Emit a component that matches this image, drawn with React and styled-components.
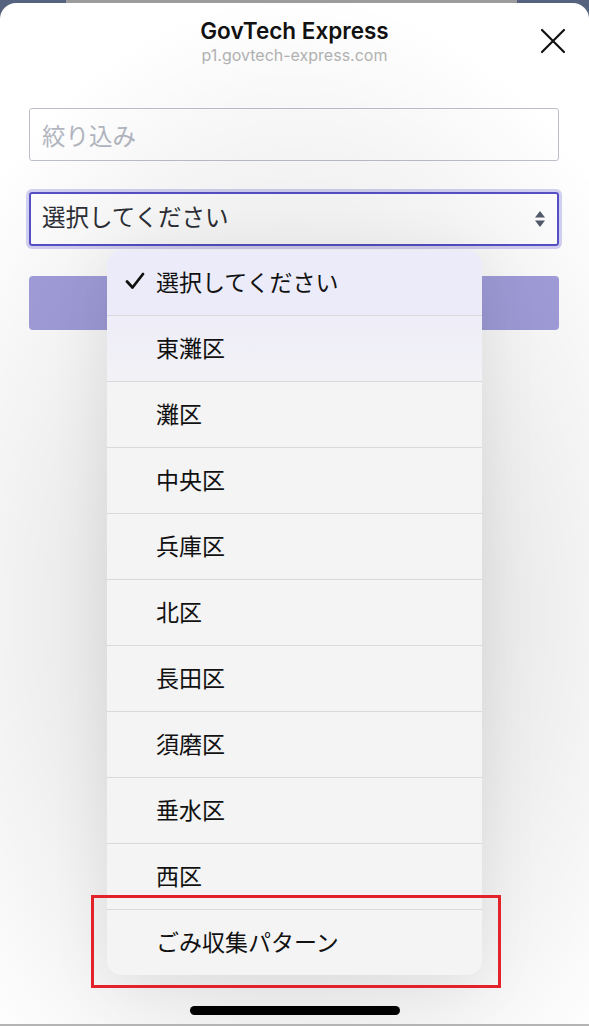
import React from "react";
import styled, { createGlobalStyle } from "styled-components";

const Global = createGlobalStyle`
  html, body { margin: 0; padding: 0; }
  body {
    width: 589px;
    height: 1026px;
    overflow: hidden;
    background: #56637e;
    font-family: "Inter", "Roboto", "Noto Sans CJK JP", sans-serif;
  }
`;

const Screen = styled.div`
  position: relative;
  width: 589px;
  height: 1026px;
  display: flex;
  flex-direction: column;
  background: linear-gradient(to right, #56637e 0 66px, #9c9c9c 66px 517px, #56637e 517px);
  overflow: hidden;
`;

const Sheet = styled.div`
  position: relative;
  margin-top: 3px;
  flex: 1;
  background: #ffffff;
  border-radius: 16px 16px 0 0;
  border-bottom: 2px solid #b4b4b4;
  display: flex;
  flex-direction: column;
  overflow: hidden;
`;

const Header = styled.header`
  position: relative;
  display: flex;
  flex-direction: column;
  align-items: center;
  padding-top: 14px;
  height: 90px;
  box-sizing: border-box;
`;

const Title = styled.div`
  font-family: "Inter", "Roboto", sans-serif;
  font-size: 22.5px;
  font-weight: 600;
  color: #111;
  line-height: 27px;
`;

const Subtitle = styled.div`
  font-family: "Inter", "Roboto", sans-serif;
  font-size: 16px;
  color: #b3b3b3;
  line-height: 23px;
`;

const Close = styled.button`
  position: absolute;
  top: 24px;
  right: 22px;
  width: 28px;
  height: 28px;
  padding: 0;
  border: none;
  background: transparent;
  display: flex;
  align-items: center;
  justify-content: center;
`;

const Form = styled.div`
  display: flex;
  flex-direction: column;
  gap: 31px;
  padding: 15px 30px 0 29px;
`;

const TextInput = styled.div`
  height: 53px;
  box-sizing: border-box;
  border: 1.5px solid #bcc0ca;
  border-radius: 3px;
  display: flex;
  align-items: center;
  padding: 0 12px;
  font-family: "Noto Sans CJK JP", sans-serif;
  font-size: 23.5px;
  color: #b2b6bf;
`;

const Select = styled.div`
  height: 54px;
  box-sizing: border-box;
  border: 2px solid #5650c6;
  border-radius: 3px;
  box-shadow: 0 0 0 3px #d4d2f3;
  display: flex;
  align-items: center;
  justify-content: space-between;
  padding: 0 11px 6px 11px;
  font-family: "Noto Sans CJK JP", sans-serif;
  font-size: 23.5px;
  color: #2c2f36;
`;

const Arrows = styled.svg`
  margin-top: 6px;
`;

const Button = styled.div`
  height: 54px;
  margin-top: -1px;
  border-radius: 4px;
  background: #a29fdd;
`;

const Dim = styled.div`
  position: absolute;
  inset: 0;
  background: radial-gradient(ellipse 420px 620px at 295px 610px, rgba(0,0,0,0.09) 45%, rgba(0,0,0,0.0) 100%);
  pointer-events: none;
`;

const Menu = styled.ul`
  position: absolute;
  left: 107px;
  top: 247px;
  width: 375px;
  margin: 0;
  padding: 0;
  list-style: none;
  border-radius: 15px;
  overflow: hidden;
  background: #f4f4f4;
  box-shadow: 0 10px 60px rgba(0,0,0,0.08);
`;

const Item = styled.li`
  height: ${(p) => (p.$first ? "65px" : "66px")};
  box-sizing: border-box;
  display: flex;
  align-items: center;
  padding: ${(p) => (p.$first ? "0 0 3px 18px" : "0 0 3px 18px")};
  font-family: "Noto Sans CJK JP", sans-serif;
  font-size: 23px;
  color: #111;
  background: ${(p) => p.$bg};
  border-top: ${(p) => (p.$first ? "none" : "1px solid #d9d9dd")};
`;

const Check = styled.span`
  width: 31px;
  display: inline-flex;
  align-items: center;
`;

const Highlight = styled.div`
  position: absolute;
  left: 91px;
  top: 892px;
  width: 410px;
  height: 93px;
  box-sizing: border-box;
  border: 3px solid #e3222a;
  pointer-events: none;
`;

const HomeBar = styled.div`
  position: absolute;
  left: 190px;
  top: 1003px;
  width: 210px;
  height: 9px;
  border-radius: 5px;
  background: #000;
`;

const items = [
  "選択してください",
  "東灘区",
  "灘区",
  "中央区",
  "兵庫区",
  "北区",
  "長田区",
  "須磨区",
  "垂水区",
  "西区",
  "ごみ収集パターン",
];

const bgFor = (i) =>
  i === 0 ? "#ecebf9" : i === 1 ? "linear-gradient(#eeedf8, #f2f2f6)" : "#f4f4f4";

export default function App() {
  return (
    <>
      <Global />
      <Screen>
        <Sheet>
          <Header>
            <Title>GovTech Express</Title>
            <Subtitle>p1.govtech-express.com</Subtitle>
            <Close aria-label="close">
              <svg width="26" height="26" viewBox="0 0 26 26">
                <path d="M2 2 L24 24 M24 2 L2 24" stroke="#111" strokeWidth="2.2" strokeLinecap="round" />
              </svg>
            </Close>
          </Header>
          <Form>
            <TextInput>絞り込み</TextInput>
            <Select>
              <span>選択してください</span>
              <Arrows width="12" height="18" viewBox="0 0 12 18">
                <path d="M6 1 L11 7.5 H1 Z" fill="#545b6a" />
                <path d="M6 17 L11 10.5 H1 Z" fill="#545b6a" />
              </Arrows>
            </Select>
            <Button />
          </Form>
          <Dim />
          <Menu>
            {items.map((t, i) => (
              <Item key={t} $first={i === 0} $bg={bgFor(i)}>
                <Check>
                  {i === 0 && (
                    <svg width="20" height="18" viewBox="0 0 20 18">
                      <path d="M2 9.5 L7.5 15.5 L18 2" fill="none" stroke="#111" strokeWidth="2.8" strokeLinecap="round" strokeLinejoin="round" />
                    </svg>
                  )}
                </Check>
                {t}
              </Item>
            ))}
          </Menu>
          <Highlight />
          <HomeBar />
        </Sheet>
      </Screen>
    </>
  );
}
